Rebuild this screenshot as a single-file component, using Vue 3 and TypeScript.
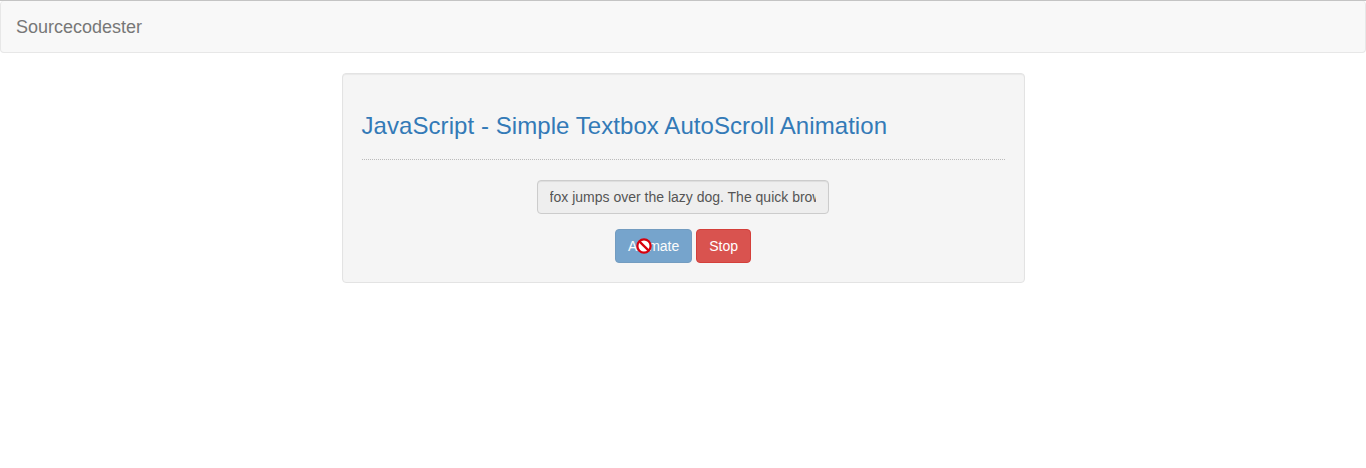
<template>
	<div class="page">
		<nav class="navbar">
			<a class="brand">Sourcecodester</a>
		</nav>
		<div class="well">
			<h3 class="title">JavaScript - Simple Textbox AutoScroll Animation</h3>
			<hr class="rule" />
			<div class="field-row">
				<input ref="box" class="textbox" type="text" readonly :value="text" />
			</div>
			<div class="actions">
				<div class="btn-wrap">
					<button class="btn btn-primary" disabled>Animate</button>
					<!-- not-allowed cursor caught in the screenshot -->
					<svg class="cursor" width="16" height="16" viewBox="0 0 16 16">
						<circle cx="8" cy="8" r="6.6" fill="#fff" stroke="#d8000c" stroke-width="2.2" />
						<path d="M3.6 3.6 L12.4 12.4" stroke="#d8000c" stroke-width="2.2" />
					</svg>
				</div>
				<button class="btn btn-danger">Stop</button>
			</div>
		</div>
	</div>
</template>

<script setup lang="ts">
import { onMounted, ref } from 'vue';

const text = 'The quick brown fox jumps over the lazy dog. The quick brown fox jumps over the lazy dog.';
const box = ref<HTMLInputElement | null>(null);

// 文本框停在动画中途的位置
onMounted(() => {
	if (box.value) box.value.scrollLeft = 107;
});
</script>

<style scoped>
.page {
	font-family: "Liberation Sans", Arial, sans-serif;
	font-size: 14px;
	line-height: 20px;
	color: #333;
	border-top: 1px solid #c4c4c4;
}
.navbar {
	box-sizing: border-box;
	height: 52px;
	padding: 16px 15px 14px;
	background: #f8f8f8;
	border: 1px solid #e7e7e7;
	border-top: none;
	border-radius: 4px;
	margin-bottom: 20px;
}
.brand {
	font-size: 18px;
	color: #777;
}
.well {
	box-sizing: border-box;
	width: 683px;
	height: 210px;
	margin: 0 auto;
	padding: 19px;
	background: #f5f5f5;
	border: 1px solid #e3e3e3;
	border-radius: 4px;
	box-shadow: inset 0 1px 1px rgba(0, 0, 0, 0.05);
}
.title {
	margin: 20px 0 0;
	font-size: 24px;
	font-weight: 500;
	line-height: 26.4px;
	letter-spacing: 0.065px;
	color: #337ab7;
}
.rule {
	margin: 20px 0;
	border: 0;
	border-top: 1px dotted #bbb;
}
.field-row {
	display: flex;
	justify-content: center;
}
.textbox {
	box-sizing: border-box;
	width: 292px;
	height: 34px;
	padding: 6px 12px;
	font: inherit;
	color: #555;
	background: #eee;
	border: 1px solid #ccc;
	border-radius: 4px;
	outline: none;
	box-shadow: inset 0 1px 1px rgba(0, 0, 0, 0.075);
}
.actions {
	display: flex;
	justify-content: center;
	gap: 4px;
	margin-top: 15px;
}
.btn-wrap {
	position: relative;
	display: flex;
}
.btn {
	box-sizing: border-box;
	height: 34px;
	padding: 6px 12px;
	font: inherit;
	color: #fff;
	border: 1px solid transparent;
	border-radius: 4px;
}
.btn-primary {
	background: #337ab7;
	border-color: #2e6da4;
	opacity: 0.65;
}
.btn-danger {
	background: #d9534f;
	border-color: #d43f3a;
}
.cursor {
	position: absolute;
	left: 21px;
	top: 9px;
}
</style>

<style>
body {
	background: #fff;
}
</style>
